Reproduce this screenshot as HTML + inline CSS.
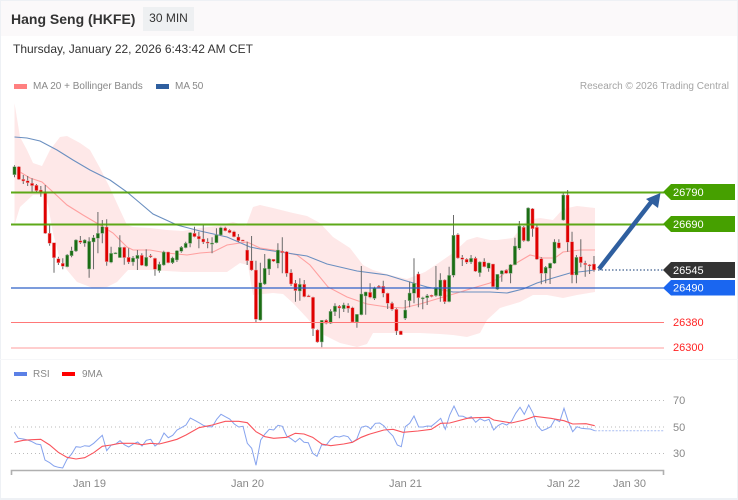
<!DOCTYPE html>
<html><head><meta charset="utf-8">
<style>
html,body{margin:0;padding:0;background:#fff}
#p{position:relative;width:738px;height:500px;overflow:hidden;background:#fff;font-family:"Liberation Sans",sans-serif}
#p div{position:absolute;white-space:nowrap}
svg{position:absolute;left:0;top:0}
svg text{font-family:"Liberation Sans",sans-serif}
</style></head><body>
<div id="p">
<div style="left:0;top:0;width:738px;height:36px;background:#fbf9fa"></div>
<div style="left:0;top:0;width:738px;height:1px;background:#eef1f5"></div>
<div style="left:0;top:0;width:1px;height:500px;background:#eef1f5"></div>
<div style="left:737px;top:0;width:1px;height:500px;background:#eef1f5"></div>
<div style="left:0;top:498px;width:738px;height:2px;background:#eef1f5"></div>
<div style="left:0;top:359px;width:738px;height:1px;background:#f6f7f9"></div>
<div style="left:11px;top:11px;font-size:14px;font-weight:bold;color:#333;line-height:16px">Hang Seng (HKFE)</div>
<div style="left:143px;top:7px;width:51px;height:24px;background:#eef0f2;color:#333;font-size:12px;line-height:23px;text-align:center">30 MIN</div>
<div style="left:13px;top:42px;font-size:12px;color:#333;line-height:15px">Thursday, January 22, 2026 6:43:42 AM CET</div>
<div style="left:14px;top:84px;width:13px;height:5px;background:#ff8080"></div>
<div style="left:33px;top:80px;font-size:10px;color:#888;line-height:13px">MA 20 + Bollinger Bands</div>
<div style="left:156px;top:84px;width:13px;height:5px;background:#2f5f9f"></div>
<div style="left:175px;top:80px;font-size:10px;color:#888;line-height:13px">MA 50</div>
<div style="right:9px;top:80px;font-size:10px;color:#a4a4a4;line-height:13px">Research © 2026 Trading Central</div>
<div style="left:14px;top:372px;width:13px;height:4px;background:#5b80e6"></div>
<div style="left:33px;top:368px;font-size:10px;color:#888;line-height:13px">RSI</div>
<div style="left:62px;top:372px;width:13px;height:4px;background:#f00"></div>
<div style="left:82px;top:368px;font-size:10px;color:#888;line-height:13px">9MA</div>
<svg id="s" width="738" height="500" viewBox="0 0 738 500" xmlns="http://www.w3.org/2000/svg">
<g id="band"></g><g id="candles"></g>
<path d="M11 192.500H664" stroke="#4ca000" stroke-width="2" fill="none" opacity=".9"/>
<path d="M11 224.500H664" stroke="#4ca000" stroke-width="2" fill="none" opacity=".9"/>
<path d="M11 288H664" stroke="#2f62c8" stroke-width="1.2" fill="none"/>
<path d="M11 322.500H664" stroke="#ff7878" stroke-width="1" fill="none"/>
<path d="M11 348H664" stroke="#ffb0b0" stroke-width="1.2" fill="none"/>
<path d="M598 270H664" stroke="#40608f" stroke-width="1.2" stroke-dasharray="1.5 2" fill="none"/>
<path d="M599 269L652 201" stroke="#2f5f9f" stroke-width="4.5" fill="none"/>
<path d="M660.500 193L646 199L658 208Z" fill="#2f5f9f"/>
<path d="M663 192L671 184H735V200H671Z" fill="#46a000"/>
<path d="M663 224L671 216H735V232H671Z" fill="#46a000"/>
<path d="M663 270L671 262H735V278H671Z" fill="#333"/>
<path d="M663 288L671 280H735V295.500H671Z" fill="#1a66f0"/>
<g font-size="11" fill="#fff">
<text x="673" y="196">26790</text><text x="673" y="228">26690</text><text x="673" y="274">26545</text><text x="673" y="291.500">26490</text>
</g>
<g font-size="11" fill="#f22">
<text x="673" y="326">26380</text><text x="673" y="351">26300</text>
</g>
<g stroke="#bbb" stroke-width="1" stroke-dasharray="1 3" fill="none">
<path d="M11 400.500H664M11 427H664M11 453.500H664"/>
</g>
<g id="rsi"></g>
<path d="M11.500 475V470.500H663.500V475" stroke="#b0b0b0" stroke-width="1.600" fill="none"/>
<g font-size="11" fill="#888">
<text x="673" y="404">70</text><text x="673" y="431">50</text><text x="673" y="457">30</text>
<text x="73" y="487">Jan 19</text><text x="231" y="487">Jan 20</text><text x="389" y="487">Jan 21</text><text x="547" y="487">Jan 22</text><text x="613" y="487">Jan 30</text>
</g>
</svg>
</div>
<script>
var A=[[196,200,224,232,'g'],[198,200,238,240,'r'],[225,238,243,252,'r'],[228,242,248,258,'r'],[235,250,257,275,'r'],[252,256,272,276,'r'],[258,270,275,290,'r'],[255,280,400,402,'r'],[375,400,430,437,'r'],[428,428,473,518,'r'],[470,476,488,495,'r'],[475,490,499,508,'r'],[462,465,500,502,'g'],[440,452,467,472,'g'],[418,420,453,456,'g'],[408,422,427,432,'r'],[418,420,430,440,'g'],[412,424,507,533,'g'],[405,413,426,508,'g'],[336,400,415,460,'g'],[360,380,400,430,'g'],[358,381,485,497,'r'],[440,460,487,490,'g'],[457,458,460,461,'g'],[406,442,473,473,'g'],[440,442,473,494,'r'],[445,472,486,492,'r'],[468,474,486,497,'g'],[450,466,476,510,'g'],[460,466,496,498,'r'],[448,472,498,500,'g'],[462,467,469,474,'r'],[473,475,508,527,'r'],[485,493,512,518,'g'],[452,456,495,497,'g'],[455,456,488,490,'r'],[470,474,488,492,'g'],[450,452,480,486,'g'],[438,442,454,458,'g'],[425,430,443,445,'g'],[396,398,430,442,'g'],[380,400,410,412,'r'],[395,409,417,445,'r'],[375,417,426,432,'r'],[415,426,429,445,'r'],[412,429,431,460,'g'],[385,405,428,430,'g'],[380,383,405,408,'g'],[380,384,392,394,'r'],[388,391,398,400,'r'],[392,395,410,412,'r'],[402,411,422,426,'r'],[419,420,422,424,'r']];
var B=[[155,180,212,225,'r'],[138,212,240,242,'r'],[212,240,388,397,'r'],[218,278,390,392,'g'],[192,235,282,285,'g'],[205,207,237,255,'g'],[207,208,214,216,'r'],[160,180,220,235,'g'],[142,184,188,250,'r'],[183,185,250,260,'r'],[238,248,282,288,'r'],[270,280,302,335,'r'],[265,283,303,332,'g'],[270,283,320,322,'r'],[314,317,319,320,'r'],[320,322,416,438,'r'],[418,420,456,458,'r'],[390,391,456,472,'g'],[388,391,400,403,'r'],[358,364,400,402,'g'],[340,348,365,378,'g'],[345,349,354,385,'r'],[338,345,356,366,'g'],[340,347,355,368,'r'],[350,353,396,398,'r'],[372,373,396,413,'g'],[228,312,374,376,'g'],[305,306,318,374,'g'],[280,307,322,325,'r'],[290,293,325,330,'g'],[285,289,291,295,'r'],[272,289,310,322,'r'],[308,310,340,357,'r'],[335,340,358,362,'r'],[355,358,423,435,'r'],[422,423,434,435,'r'],[330,360,385,390,'g'],[275,309,332,352,'g'],[205,280,310,340,'g'],[245,252,323,352,'r'],[320,323,326,358,'g'],[312,317,323,345,'g'],[314,316,319,322,'r'],[228,292,317,320,'g'],[250,270,318,335,'g'],[268,270,335,342,'r'],[230,256,335,337,'g'],[75,136,256,262,'g'],[130,134,204,206,'r'],[195,203,208,228,'r'],[205,208,217,222,'r'],[195,205,216,222,'g'],[200,205,244,246,'r'],[214,216,248,260,'g']];
var C=[[265,275,290,292,'r'],[278,279,295,305,'g'],[282,282,350,352,'r'],[312,313,358,360,'g'],[300,302,312,335,'g'],[298,301,310,312,'r'],[282,284,310,340,'g'],[203,228,284,286,'g'],[153,168,235,240,'g'],[168,172,212,215,'r'],[112,114,213,215,'g'],[114,116,176,200,'r'],[165,172,268,270,'r'],[262,266,310,343,'r'],[288,292,310,340,'g'],[278,280,295,342,'g'],[208,216,280,282,'g'],[208,218,234,236,'r'],[70,75,150,152,'g'],[60,75,217,245,'r'],[185,215,315,340,'r'],[255,262,315,340,'g'],[208,260,278,292,'r'],[272,280,284,320,'r'],[282,284,287,312,'r'],[258,282,300,305,'r']];
function conv(a,o){return a.map(function(c){return [o+c[0]/3,o+c[1]/3,o+c[2]/3,o+c[3]/3,c[4]]})}
var all=conv(A,100).concat(conv(B,190),conv(C,170));
var wick='',g='',r='';
all.forEach(function(c,i){var x=14.5+4.39*i;
 wick+='M'+x.toFixed(2)+' '+c[0].toFixed(1)+'V'+c[3].toFixed(1);
 var h=Math.max(c[2]-c[1],1.2),d='M'+(x-1.6).toFixed(2)+' '+c[1].toFixed(1)+'h3.2v'+h.toFixed(1)+'h-3.2z';
 if(c[4]=='g')g+=d;else r+=d;});
document.getElementById('candles').innerHTML='<path d="'+wick+'" stroke="#6a6a6a" stroke-width="1" fill="none"/><path d="'+g+'" fill="#1b6e14" stroke="#9db79a" stroke-width=".5"/><path d="'+r+'" fill="#e00000" stroke="#e9a0a0" stroke-width=".5"/>';
function P(a){return 'M'+a.map(function(p){return p[0].toFixed(1)+' '+p[1].toFixed(1)}).join('L')}
var up=[[14.5,103],[20,137],[27,150],[33,163],[42,166],[50,150],[60,137],[67,136],[80,143],[90,150],[100,168],[110,188],[120,210],[127,225],[133,227],[150,228],[167,230],[183,231],[200,228],[217,226],[233,222],[246,226],[253,207],[260,205],[273,208],[293,213],[307,216],[320,223],[333,237],[350,248],[363,265],[373,270],[390,275],[407,279],[425,272],[440,262],[453,253],[467,240],[477,237],[490,240],[497,240],[513,238],[527,220],[540,218],[553,220],[563,209],[577,206],[595,208]];
var lo=[[595,292],[577,295],[563,298],[547,295],[533,295],[520,302],[500,308],[487,320],[480,333],[467,337],[453,335],[440,334],[420,333],[400,333],[373,333],[367,344],[357,347],[340,343],[320,333],[307,318],[293,303],[283,294],[273,293],[253,295],[248,265],[240,263],[227,272],[183,272],[150,270],[128,270],[117,282],[107,287],[93,288],[77,282],[67,270],[60,260],[53,233],[48,205],[45,195],[33,195],[20,207],[14.5,225]];
var ma20=[[20,172],[30,178],[42,182],[53,192],[67,205],[83,215],[100,225],[113,233],[127,247],[133,250],[150,250],[167,253],[187,255],[200,253],[213,252],[227,245],[247,242],[260,248],[280,251],[297,255],[310,265],[328,287],[347,297],[367,304],[387,307],[403,308],[420,304],[440,298],[457,293],[473,288],[490,283],[500,277],[513,265],[530,255],[543,258],[555,258],[563,252],[580,250],[595,250]];
var ma50=[[14.5,137],[27,138],[40,141],[57,150],[73,160],[90,170],[110,180],[127,192],[140,203],[153,214],[177,225],[200,231],[227,237],[250,247],[260,249],[280,252],[307,256],[327,264],[357,271],[387,275],[403,280],[427,287],[453,292],[473,292],[490,292],[507,293],[523,289],[537,283],[553,278],[570,273],[595,270]];
document.getElementById('band').innerHTML='<path d="'+P(up.concat(lo))+'Z" fill="#fee8e8"/><path d="'+P(ma20)+'" stroke="#ffa0a0" stroke-width="1.100" fill="none"/><path d="'+P(ma50)+'" stroke="#6a8fc0" stroke-width="1.100" fill="none"/>';
var r5=[[43,217],[55,235],[70,237],[83,240],[96,245],[109,252],[122,254],[135,300],[149,308],[162,318],[175,322],[188,324],[201,298],[215,282],[228,260],[241,262],[254,257],[268,259],[281,250],[294,238],[307,226],[320,272],[333,256],[347,252],[360,242],[373,254],[386,261],[400,252],[413,246],[426,258],[439,241],[452,238],[465,258],[478,248],[492,219],[505,233],[518,226],[531,210],[544,203],[558,195],[571,174],[584,181],[597,188],[610,196],[623,200],[637,200],[650,178],[663,163],[676,170],[689,177],[703,192],[716,201],[729,199],[742,250],[755,265],[768,316],[782,240],[795,222],[808,208],[821,210],[834,196],[847,199],[860,228],[873,236],[886,246],[899,235],[912,247],[925,248],[938,280],[951,289],[965,254],[978,256],[992,238],[1005,229],[1018,231],[1031,227],[1044,230],[1057,247],[1070,238],[1084,202],[1097,198]];
var r6=[[0,200],[8,207],[22,190],[35,189],[48,198],[62,215],[75,228],[88,255],[100,260],[112,200],[125,190],[138,168],[152,201],[165,201],[178,198],[190,199],[205,187],[218,175],[232,208],[245,165],[258,138],[272,168],[285,169],[298,175],[310,170],[323,187],[336,176],[350,183],[363,178],[377,210],[390,197],[403,190],[416,195],[430,185],[443,160],[456,142],[469,163],[482,135],[495,160],[508,197],[522,212],[535,207],[548,200],[561,178],[575,185],[588,145],[601,185],[614,215],[627,200],[640,205],[654,206],[667,207],[680,212]];
var m5=[[43,247],[70,241],[96,239],[122,238],[149,255],[175,277],[201,292],[228,297],[254,293],[281,278],[307,259],[333,255],[360,250],[400,250],[426,254],[452,250],[478,252],[505,245],[531,238],[558,225],[597,203],[637,195],[676,184],[716,184],[742,188],[768,215],[795,230],[821,235],[860,232],[886,220],[912,222],[938,232],[965,252],[992,257],[1031,252],[1057,247],[1084,232],[1104,224]];
var m6=[[6,222],[48,210],[75,208],[105,217],[150,213],[190,208],[218,190],[245,189],[298,175],[323,173],[363,172],[377,180],[430,189],[469,180],[500,169],[548,175],[588,182],[614,192],[654,191],[680,197]];
function c5(a){return a.map(function(p){return [p[0]/3,360+p[1]/3]})}
function c6(a){return a.map(function(p){return [368+p[0]/3,360+p[1]/3]})}
var rs=c5(r5).concat(c6(r6)),ms=c5(m5).concat(c6(m6));
document.getElementById('rsi').innerHTML='<path d="M594.7 430.7H664" stroke="#a9bdf2" stroke-width="1" stroke-dasharray="2 1.500" fill="none"/><path d="'+P(rs)+'" stroke="#86a3ee" stroke-width="1" fill="none"/><path d="'+P(ms)+'" stroke="#f9545c" stroke-width="1.100" fill="none"/>';
</script>
</body></html>
